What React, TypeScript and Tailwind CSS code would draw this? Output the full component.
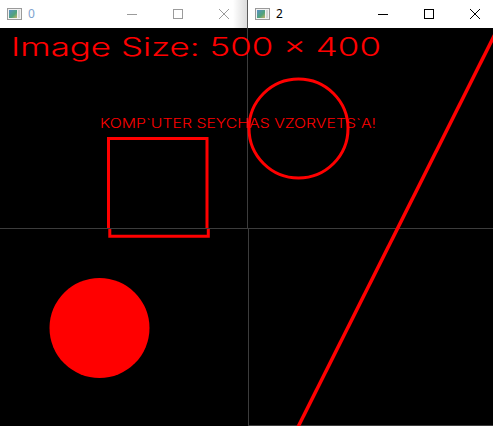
import React from 'react';

type TitleBarProps = {
  title: string;
  active: boolean;
  width: string;
};

const AppIcon = () => (
  <svg width="15" height="12" viewBox="0 0 15 12">
    <defs>
      <linearGradient id="ico" x1="0" y1="0" x2="1" y2="1">
        <stop offset="0" stopColor="#5b8fc8" />
        <stop offset="0.6" stopColor="#4fa37a" />
        <stop offset="1" stopColor="#c8b46a" />
      </linearGradient>
    </defs>
    <rect x="0.5" y="0.5" width="14" height="11" fill="#f2f2f2" stroke="#9a9a9a" />
    <rect x="2" y="2" width="8" height="8" fill="url(#ico)" />
    <rect x="11" y="2" width="2" height="8" fill="#d6d6d6" />
  </svg>
);

const TitleBar: React.FC<TitleBarProps> = ({ title, active, width }) => {
  const stroke = active ? '#000000' : '#9b9b9b';
  return (
    <div className={`${width} h-[28px] bg-white flex items-center overflow-hidden relative shrink-0`}>
      <div className="pl-[7px] flex items-center">
        <AppIcon />
        <span
          className={`ml-[6px] text-[12px] leading-none ${active ? 'text-black' : 'text-[#7fa3cf]'}`}
          style={{ fontFamily: '"Noto Sans", "Open Sans", sans-serif' }}
        >
          {title}
        </span>
      </div>
      <div className={`ml-auto flex h-full ${active ? '-mr-[5px]' : ''}`}>
        <div className="w-[46px] h-full flex items-center justify-center">
          <svg width="10" height="10" viewBox="0 0 10 10">
            <line x1="0" y1="5.5" x2="10" y2="5.5" stroke={stroke} strokeWidth="1" />
          </svg>
        </div>
        <div className="w-[46px] h-full flex items-center justify-center">
          <svg width="10" height="10" viewBox="0 0 10 10">
            <rect x="0.5" y="0.5" width="9" height="9" fill="none" stroke={stroke} strokeWidth="1" />
          </svg>
        </div>
        <div className="w-[46px] h-full flex items-center justify-center">
          <svg width="10" height="10" viewBox="0 0 10 10">
            <path d="M0 0 L10 10 M10 0 L0 10" stroke={stroke} strokeWidth="1" />
          </svg>
        </div>
      </div>
      {!active && (
        <div className="absolute right-0 top-0 h-full w-[14px] bg-gradient-to-r from-white to-[#dcdcdc]" />
      )}
    </div>
  );
};

const Canvas = () => (
  <svg width="493" height="398" viewBox="0 28 493 398" className="block">
    <rect x="0" y="28" width="493" height="398" fill="#000" />
    {/* window seams */}
    <line x1="0" y1="228.5" x2="493" y2="228.5" stroke="#3c3c3c" strokeWidth="1" />
    <line x1="247.5" y1="28" x2="247.5" y2="228" stroke="#3c3c3c" strokeWidth="1" />
    <line x1="248.5" y1="229" x2="248.5" y2="426" stroke="#3c3c3c" strokeWidth="1" />
    <line x1="248" y1="425.5" x2="493" y2="425.5" stroke="#3c3c3c" strokeWidth="1" />

    <text
      x="11"
      y="56"
      fontSize="25"
      fontWeight="300"
      fill="#ff0000"
      textLength="370"
      lengthAdjust="spacingAndGlyphs"
      style={{ fontFamily: 'Inter, "DejaVu Sans", sans-serif' }}
    >
      Image Size: 500 x 400
    </text>
    <text
      x="100"
      y="128"
      fontSize="13"
      fontWeight="300"
      fill="#ff0000"
      textLength="276"
      lengthAdjust="spacingAndGlyphs"
      style={{ fontFamily: 'Inter, "DejaVu Sans", sans-serif' }}
    >
      KOMP`UTER SEYCHAS VZORVETS`A!
    </text>

    <path d="M108.5 228 V138.5 H207 V228" fill="none" stroke="#ff0000" strokeWidth="3" />
    <path d="M109.8 229 V236.2 H208.3 V229" fill="none" stroke="#ff0000" strokeWidth="3" />

    <circle cx="298.5" cy="128.5" r="49.5" fill="none" stroke="#ff0000" strokeWidth="3" />
    <circle cx="99.5" cy="328" r="50" fill="#ff0000" />

    <line x1="298" y1="427" x2="494.5" y2="35" stroke="#ff0000" strokeWidth="3.5" />
  </svg>
);

export default function App() {
  return (
    <div className="w-[493px] h-[426px] overflow-hidden bg-black">
      <div className="flex">
        <TitleBar title="0" active={false} width="w-[247px]" />
        <div className="w-px h-[28px] bg-[#5a5a5a] shrink-0" />
        <TitleBar title="2" active width="w-[245px]" />
      </div>
      <Canvas />
    </div>
  );
}
